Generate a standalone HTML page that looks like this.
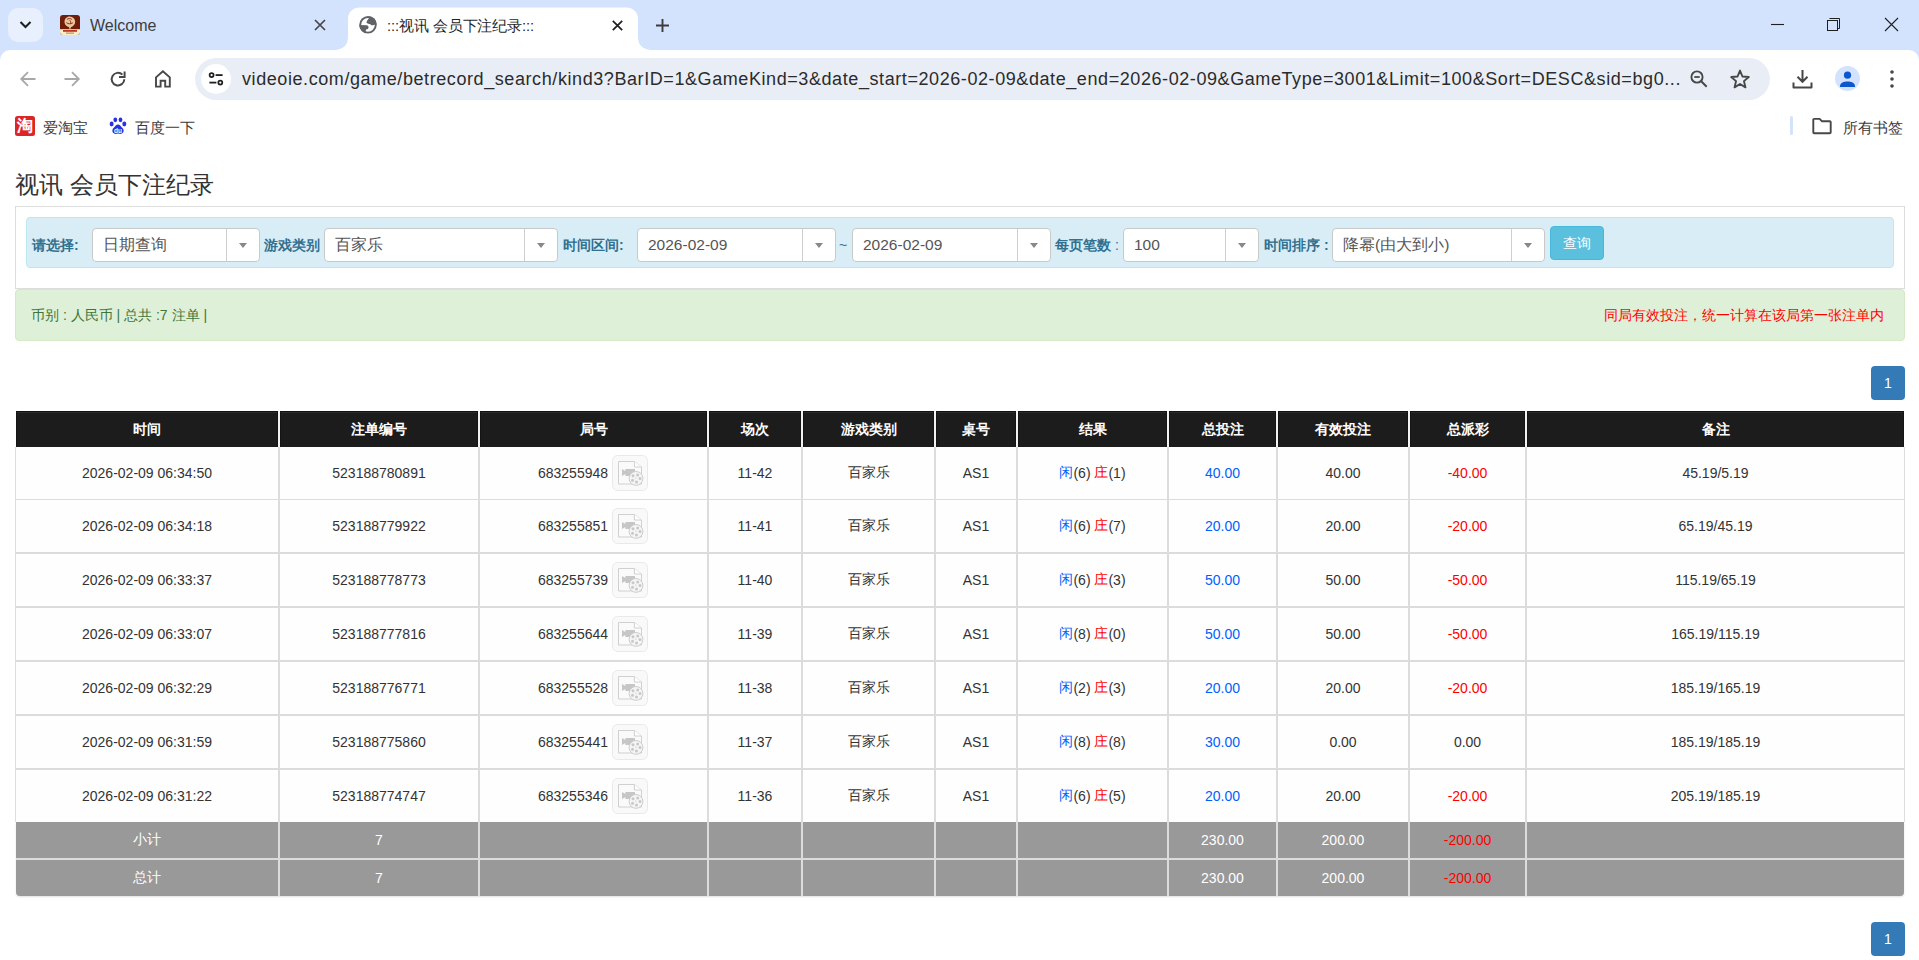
<!DOCTYPE html>
<html><head><meta charset="utf-8">
<style>
*{box-sizing:border-box}
html,body{margin:0;padding:0;width:1919px;height:960px;overflow:hidden;background:#fff;font-family:"Liberation Sans",sans-serif;position:relative}
.abs{position:absolute}
svg{display:block}
/* chrome */
#tabbar{position:absolute;left:0;top:0;width:1919px;height:64px;background:#d3e3fd}
#toolbar{position:absolute;left:0;top:50px;width:1919px;height:54px;background:#fff;border-radius:10px 10px 0 0}
.ttl{position:absolute;font-size:16px;color:#1f1f1f;white-space:nowrap;line-height:20px}
#omni{position:absolute;left:195px;top:58px;width:1575px;height:42px;border-radius:21px;background:#e9eef6}
#url{position:absolute;left:242px;top:67px;font-size:18px;line-height:24px;color:#2b2b2b;white-space:nowrap;letter-spacing:0.58px}
.bm{position:absolute;font-size:15px;color:#3b3b3b;white-space:nowrap;line-height:20px}
/* page */
#title{position:absolute;left:15px;top:170px;font-size:24px;line-height:30px;color:#333;white-space:nowrap}
#panel{position:absolute;left:15px;top:206px;width:1890px;height:83px;border:1px solid #ddd;background:#fff}
#info{position:absolute;left:26px;top:217px;width:1868px;height:51px;border:1px solid #bce8f1;background:#d9edf7;border-radius:4px}
.lb{position:absolute;top:235px;font-size:14px;line-height:20px;font-weight:bold;color:#31708f;white-space:nowrap}
.sel{position:absolute;top:228px;height:34px;border:1px solid #c9c9c9;border-radius:4px;background:#fff}
.sel .tx{position:absolute;left:10px;top:6px;font-size:15.5px;line-height:20px;color:#555;white-space:nowrap}
.sel .dv{position:absolute;right:32px;top:0;bottom:0;width:1px;background:#cfcfcf}
.sel .ca{position:absolute;right:12px;top:14px;width:0;height:0;border-left:4px solid transparent;border-right:4px solid transparent;border-top:5px solid #888}
#btn{position:absolute;left:1550px;top:226px;width:54px;height:34px;background:#5bc0de;border:1px solid #46b8da;border-radius:4px;color:#fff;font-size:14px;line-height:32px;text-align:center}
#alert{position:absolute;left:15px;top:289px;width:1890px;height:52px;background:#dff0d8;border:1px solid #d6e9c6;border-radius:4px}
.gt{position:absolute;top:305px;font-size:14px;line-height:20px;color:#3c763d;white-space:nowrap}
.pg{position:absolute;left:1871px;width:34px;height:34px;background:#337ab7;border-radius:4px;color:#fff;font-size:14px;line-height:34px;text-align:center}
/* table */
.th{position:absolute;background:#1c1c1c;border-top:1px solid #111;box-shadow:inset 0 1px 0 #2a2a2a}
.hc{position:absolute;padding-top:2px;display:flex;align-items:center;justify-content:center;color:#fff;font-weight:bold;font-size:14px;box-shadow:inset 1px 0 0 #141414,inset -1px 0 0 #141414}
.vd{position:absolute;width:2px;background:#f2f2f2}
.tb{position:absolute;background:#fefefe;border-left:1px solid #ddd;border-right:1px solid #ddd}
.hl{position:absolute;background:#dcdcdc}
.vl{position:absolute;width:2px;background:#dcdcdc}
.c{position:absolute;display:flex;align-items:center;justify-content:center;color:#333;font-size:14px;white-space:nowrap}
.c span,.hc span{display:inline-flex;align-items:center}
.c.w{color:#fff}
.gb{position:absolute;background:#999;border-radius:0 0 4px 4px;box-shadow:0 1px 2px rgba(0,0,0,.12)}
.bl{color:#0060ff;font-weight:normal}
.rd{color:#f00;font-weight:normal}
.vi{display:inline-block;width:36px;height:36px;margin-left:4px;margin-right:1px;position:relative}
.vi svg{position:absolute;left:0;top:0}
</style></head><body>

<!-- ============ TAB BAR ============ -->
<div id="tabbar"></div>
<div class="abs" style="left:8px;top:8px;width:35px;height:34px;border-radius:10px;background:#e8effd"></div>
<svg class="abs" style="left:18px;top:17px" width="15" height="15" viewBox="0 0 15 15"><path d="M2.5 5l5 5 5-5" fill="none" stroke="#1f1f1f" stroke-width="2.1"/></svg>
<!-- favicon tab1 -->
<svg class="abs" style="left:60px;top:15px" width="20" height="20" viewBox="0 0 20 20"><defs><clipPath id="fc"><rect x="0" y="0" width="20" height="20" rx="3"/></clipPath></defs><g clip-path="url(#fc)"><rect width="20" height="20" fill="#6f1c0a"/><rect y="14.2" width="20" height="5.8" fill="#f7eccb"/><path d="M9.8 1.6c2.8.1 5.4 2.2 5.4 5.4 0 2.6-2.2 4.4-4.3 5.2l-.3 1.6h-1.3l-.3-1.6C7 11.5 4.5 9.8 4.5 7c0-3.1 2.4-5.5 5.3-5.4z" fill="#e9c49c"/><path d="M7 4.5c1.2-1.3 3.6-1.4 4.8 0M6.4 7.6c1.5 1.5 4.4 1.6 6.4.2M9.6 5.2c.9.8 1.3 2 1 3.3" fill="none" stroke="#7a2410" stroke-width="0.9"/><rect x="3" y="15" width="14" height="1.8" fill="#b83a1e"/><rect x="6" y="17.6" width="8" height="1" fill="#c9773e"/></g></svg>
<div class="ttl" style="left:90px;top:16px;color:#3c3c3c">Welcome</div>
<svg class="abs" style="left:314px;top:19px" width="12" height="12" viewBox="0 0 12 12"><path d="M1 1l10 10M11 1L1 11" stroke="#474747" stroke-width="1.7"/></svg>
<!-- active tab -->
<svg class="abs" style="left:334px;top:7px" width="320" height="44" viewBox="0 0 320 44"><path d="M0 43 C9 43 14 38 14 30 L14 12 C14 5 19 0.5 26 0.5 L292 0.5 C299 0.5 304 5 304 12 L304 30 C304 38 309 43 318 43 L320 44 L0 44z" fill="#fff"/></svg>
<svg class="abs" style="left:359px;top:16px" width="18" height="18" viewBox="0 0 18 18"><defs><clipPath id="gc"><circle cx="9" cy="8.8" r="8.75"/></clipPath></defs><circle cx="9" cy="8.8" r="7.8" fill="#fff" stroke="#5f6368" stroke-width="1.9"/><g clip-path="url(#gc)" fill="#5f6368"><path d="M10.25 0L10.25 2C9.4 2.9 7.6 5 7.5 6.2C7.6 7.3 8.5 7.5 10.6 7.9C11.6 8.2 12 9.1 13.2 9.3C14.4 9.4 15.4 9 16.2 8.6L18 8.6L18 0Z"/><path d="M0 9L7.6 9.3C9.1 9.6 9.7 10.6 9.5 11.7C9.3 12.8 8.4 13.1 7.5 13.3C6.8 13.7 6.6 14.8 7 16L7 18L0 18Z"/></g></svg>
<div class="ttl" style="left:387px;top:16px;font-size:14.7px;letter-spacing:-0.1px;color:#1f1f1f">:::视讯 会员下注纪录:::</div>
<svg class="abs" style="left:611px;top:19px" width="13" height="13" viewBox="0 0 13 13"><path d="M1.8 1.8l9.4 9.4M11.2 1.8l-9.4 9.4" stroke="#1f1f1f" stroke-width="1.7"/></svg>
<svg class="abs" style="left:655px;top:18px" width="15" height="15" viewBox="0 0 15 15"><path d="M7.5 1v13M1 7.5h13" stroke="#3c3c3c" stroke-width="1.9"/></svg>
<!-- window controls -->
<svg class="abs" style="left:1770px;top:23px" width="15" height="3" viewBox="0 0 15 3"><path d="M1 1.5h13" stroke="#1f1f1f" stroke-width="1.1"/></svg>
<svg class="abs" style="left:1826px;top:17px" width="16" height="16" viewBox="0 0 16 16"><rect x="1.5" y="3.5" width="10" height="10" fill="none" stroke="#1f1f1f" stroke-width="1"/><path d="M3.5 1.5h10v10h-2" fill="none" stroke="#1f1f1f" stroke-width="1"/></svg>
<svg class="abs" style="left:1884px;top:17px" width="15" height="15" viewBox="0 0 15 15"><path d="M1 1l13 13M14 1L1 14" stroke="#1f1f1f" stroke-width="1.1"/></svg>

<!-- ============ TOOLBAR ============ -->
<div id="toolbar"></div>
<svg class="abs" style="left:19px;top:70px" width="18" height="18" viewBox="0 0 18 18"><path d="M16.5 9H2.5M9 2.2L2.2 9 9 15.8" fill="none" stroke="#a8a8a8" stroke-width="1.8"/></svg>
<svg class="abs" style="left:63px;top:70px" width="18" height="18" viewBox="0 0 18 18"><path d="M1.5 9h14M9 2.2L15.8 9 9 15.8" fill="none" stroke="#a8a8a8" stroke-width="1.8"/></svg>
<svg class="abs" style="left:108px;top:69px" width="20" height="20" viewBox="0 0 20 20"><path d="M16.3 10.2a6.3 6.3 0 1 1-1.9-4.6" fill="none" stroke="#474747" stroke-width="2"/><path d="M16.6 2.5v5.6H11" fill="none" stroke="#474747" stroke-width="2"/></svg>
<svg class="abs" style="left:153px;top:69px" width="20" height="20" viewBox="0 0 20 20"><path d="M3 17.6V8.4L9.9 2.2l6.9 6.2v9.2h-4.6v-5.9H7.6v5.9z" fill="none" stroke="#474747" stroke-width="1.9"/></svg>
<div id="omni"></div>
<div class="abs" style="left:201px;top:64px;width:30px;height:30px;border-radius:15px;background:#fff"></div>
<svg class="abs" style="left:206px;top:69px" width="20" height="20" viewBox="0 0 20 20"><circle cx="5.6" cy="6.1" r="2" fill="none" stroke="#1f1f1f" stroke-width="1.7"/><path d="M9.6 6.1h7" stroke="#1f1f1f" stroke-width="1.8"/><circle cx="14.3" cy="13.6" r="2" fill="none" stroke="#1f1f1f" stroke-width="1.7"/><path d="M3.4 13.6h7" stroke="#1f1f1f" stroke-width="1.8"/></svg>
<div id="url">videoie.com/game/betrecord_search/kind3?BarID=1&amp;GameKind=3&amp;date_start=2026-02-09&amp;date_end=2026-02-09&amp;GameType=3001&amp;Limit=100&amp;Sort=DESC&amp;sid=bg0...</div>
<svg class="abs" style="left:1689px;top:69px" width="20" height="20" viewBox="0 0 20 20"><circle cx="8" cy="8" r="5.6" fill="none" stroke="#474747" stroke-width="1.9"/><path d="M5.3 8h5.4" stroke="#474747" stroke-width="1.8"/><path d="M12.2 12.2l5.5 5.5" stroke="#474747" stroke-width="2"/></svg>
<svg class="abs" style="left:1729px;top:68px" width="22" height="22" viewBox="0 0 22 22"><path d="M11 2.6l2.45 5.9 6.35.5-4.85 4.15 1.5 6.2L11 16l-5.45 3.35 1.5-6.2L2.2 9l6.35-.5z" fill="none" stroke="#474747" stroke-width="1.9" stroke-linejoin="round"/></svg>
<svg class="abs" style="left:1792px;top:69px" width="21" height="21" viewBox="0 0 21 21"><path d="M10.5 1v11.5M5.5 7.8l5 5 5-5" fill="none" stroke="#474747" stroke-width="2"/><path d="M1.5 13.5v5h18v-5" fill="none" stroke="#474747" stroke-width="2" stroke-linejoin="round"/></svg>
<div class="abs" style="left:1835px;top:66px;width:25px;height:25px;border-radius:13px;background:#d3e3fd"></div>
<svg class="abs" style="left:1838px;top:70px" width="19" height="18" viewBox="0 0 19 18"><circle cx="9.5" cy="5.2" r="3.6" fill="#0b57d0"/><path d="M2 16.2c0-3.3 4-4.6 7.5-4.6s7.5 1.3 7.5 4.6V17H2z" fill="#0b57d0"/></svg>
<svg class="abs" style="left:1888px;top:69px" width="8" height="20" viewBox="0 0 8 20"><circle cx="4" cy="3" r="1.8" fill="#474747"/><circle cx="4" cy="10" r="1.8" fill="#474747"/><circle cx="4" cy="17" r="1.8" fill="#474747"/></svg>

<!-- ============ BOOKMARKS ============ -->
<div class="abs" style="left:15px;top:116px;width:20px;height:20px;border-radius:2.5px;background:#dc2626;color:#fff;font-size:16px;font-weight:bold;line-height:20px;text-align:center;overflow:hidden">淘</div>
<div class="bm" style="left:43px;top:118px">爱淘宝</div>
<svg class="abs" style="left:109px;top:117px" width="18" height="18" viewBox="0 0 18 18"><ellipse cx="2.6" cy="7" rx="2" ry="2.4" fill="#2932e1"/><ellipse cx="6.3" cy="2.8" rx="1.9" ry="2.4" fill="#2932e1"/><ellipse cx="11.5" cy="2.8" rx="1.9" ry="2.4" fill="#2932e1"/><ellipse cx="15.3" cy="7" rx="2" ry="2.4" fill="#2932e1"/><path d="M9 7.5c2 0 3 2.2 4.7 3.8 1.4 1.4 1.5 4.8-1.4 5.5-1.2.3-2.2-.3-3.3-.3s-2.1.6-3.3.3C2.8 16.1 3 12.7 4.3 11.3 6 9.7 7 7.5 9 7.5z" fill="#2932e1"/><text x="9" y="15.6" font-size="6.5" font-family="Liberation Sans" font-weight="bold" fill="#fff" text-anchor="middle">du</text></svg>
<div class="bm" style="left:135px;top:118px">百度一下</div>
<div class="abs" style="left:1790px;top:116px;width:3px;height:19px;border-radius:2px;background:#d3e3fd"></div>
<svg class="abs" style="left:1811px;top:117px" width="22" height="18" viewBox="0 0 22 18"><path d="M2.3 2.8c0-.5.4-.9.9-.9h5.4l2.2 2.3h8c.5 0 .9.4.9.9v10.2c0 .5-.4.9-.9.9H3.2c-.5 0-.9-.4-.9-.9z" fill="none" stroke="#474747" stroke-width="1.9" stroke-linejoin="round"/></svg>
<div class="bm" style="left:1843px;top:118px">所有书签</div>

<!-- ============ PAGE ============ -->
<div id="title">视讯 会员下注纪录</div>
<div id="panel"></div>
<div id="info"></div>
<div class="lb" style="left:32px">请选择:</div>
<div class="sel" style="left:92px;width:168px"><div class="tx">日期查询</div><div class="dv"></div><div class="ca"></div></div>
<div class="lb" style="left:264px">游戏类别</div>
<div class="sel" style="left:324px;width:234px"><div class="tx">百家乐</div><div class="dv"></div><div class="ca"></div></div>
<div class="lb" style="left:563px">时间区间:</div>
<div class="sel" style="left:637px;width:199px"><div class="tx">2026-02-09</div><div class="dv"></div><div class="ca"></div></div>
<div class="abs" style="left:839px;top:235px;font-size:14px;line-height:20px;color:#31708f">~</div>
<div class="sel" style="left:852px;width:199px"><div class="tx">2026-02-09</div><div class="dv"></div><div class="ca"></div></div>
<div class="lb" style="left:1055px">每页笔数 <span style="font-weight:normal">:</span></div>
<div class="sel" style="left:1123px;width:136px"><div class="tx">100</div><div class="dv"></div><div class="ca"></div></div>
<div class="lb" style="left:1264px">时间排序 :</div>
<div class="sel" style="left:1332px;width:213px"><div class="tx">降幂(由大到小)</div><div class="dv"></div><div class="ca"></div></div>
<div id="btn">查询</div>
<div id="alert"></div>
<div class="gt" style="left:31px">币别 : 人民币 | 总共 :7 注单 |</div>
<div class="gt" style="left:1604px;color:#f00">同局有效投注，统一计算在该局第一张注单内</div>
<div class="pg" style="top:366px">1</div>

<div class="th" style="left:16px;top:411px;width:1888px;height:36px"></div>
<div class="hc" style="left:16px;top:411px;width:262px;height:36px"><span>时间</span></div>
<div class="hc" style="left:280px;top:411px;width:198px;height:36px"><span>注单编号</span></div>
<div class="hc" style="left:480px;top:411px;width:227px;height:36px"><span>局号</span></div>
<div class="hc" style="left:709px;top:411px;width:92px;height:36px"><span>场次</span></div>
<div class="hc" style="left:803px;top:411px;width:131px;height:36px"><span>游戏类别</span></div>
<div class="hc" style="left:936px;top:411px;width:80px;height:36px"><span>桌号</span></div>
<div class="hc" style="left:1018px;top:411px;width:149px;height:36px"><span>结果</span></div>
<div class="hc" style="left:1169px;top:411px;width:107px;height:36px"><span>总投注</span></div>
<div class="hc" style="left:1278px;top:411px;width:130px;height:36px"><span>有效投注</span></div>
<div class="hc" style="left:1410px;top:411px;width:115px;height:36px"><span>总派彩</span></div>
<div class="hc" style="left:1527px;top:411px;width:377px;height:36px"><span>备注</span></div>
<div class="vd" style="left:278px;top:411px;height:36px"></div>
<div class="vd" style="left:478px;top:411px;height:36px"></div>
<div class="vd" style="left:707px;top:411px;height:36px"></div>
<div class="vd" style="left:801px;top:411px;height:36px"></div>
<div class="vd" style="left:934px;top:411px;height:36px"></div>
<div class="vd" style="left:1016px;top:411px;height:36px"></div>
<div class="vd" style="left:1167px;top:411px;height:36px"></div>
<div class="vd" style="left:1276px;top:411px;height:36px"></div>
<div class="vd" style="left:1408px;top:411px;height:36px"></div>
<div class="vd" style="left:1525px;top:411px;height:36px"></div>
<div class="tb" style="left:15px;top:447px;width:1890px;height:375px"></div>
<div class="hl" style="left:16px;top:499px;width:1888px;height:1px"></div>
<div class="hl" style="left:16px;top:552px;width:1888px;height:2px"></div>
<div class="hl" style="left:16px;top:606px;width:1888px;height:2px"></div>
<div class="hl" style="left:16px;top:660px;width:1888px;height:2px"></div>
<div class="hl" style="left:16px;top:714px;width:1888px;height:2px"></div>
<div class="hl" style="left:16px;top:768px;width:1888px;height:2px"></div>
<div class="vl" style="left:278px;top:447px;height:375px"></div>
<div class="vl" style="left:478px;top:447px;height:375px"></div>
<div class="vl" style="left:707px;top:447px;height:375px"></div>
<div class="vl" style="left:801px;top:447px;height:375px"></div>
<div class="vl" style="left:934px;top:447px;height:375px"></div>
<div class="vl" style="left:1016px;top:447px;height:375px"></div>
<div class="vl" style="left:1167px;top:447px;height:375px"></div>
<div class="vl" style="left:1276px;top:447px;height:375px"></div>
<div class="vl" style="left:1408px;top:447px;height:375px"></div>
<div class="vl" style="left:1525px;top:447px;height:375px"></div>
<div class="c" style="left:16px;top:447px;width:262px;height:52px"><span>2026-02-09 06:34:50</span></div>
<div class="c" style="left:280px;top:447px;width:198px;height:52px"><span>523188780891</span></div>
<div class="c" style="left:480px;top:447px;width:227px;height:52px"><span>683255948<span class="vi"><svg width="36" height="36" viewBox="0 0 36 36"><rect x="0.5" y="0.5" width="35" height="35" rx="5" fill="#f9f9f9" stroke="#e9e9e9"/><path d="M6.5 6.5H22.4L29.5 12V29H6.5Z" fill="#fafafa" stroke="#d0d0d0"/><path d="M22.4 6.5V12H29.5" fill="#fff" stroke="#d0d0d0"/><path d="M10 14L13.4 16V14H23V21H13.4V19L10 21Z" fill="#c6c6c6"/><circle cx="24" cy="23.4" r="6.9" fill="#f5f5f5" stroke="#cdcdcd"/><circle cx="21" cy="20.7" r="1.5" fill="#c8c8c8"/><circle cx="25.7" cy="19.9" r="1.5" fill="#c8c8c8"/><circle cx="28" cy="23.6" r="1.5" fill="#c8c8c8"/><circle cx="24.5" cy="27" r="1.5" fill="#c8c8c8"/><circle cx="20.5" cy="25.3" r="1.5" fill="#c8c8c8"/><circle cx="23.8" cy="23.2" r="0.6" fill="#c8c8c8"/></svg></span></span></div>
<div class="c" style="left:709px;top:447px;width:92px;height:52px"><span>11-42</span></div>
<div class="c" style="left:803px;top:447px;width:131px;height:52px"><span>百家乐</span></div>
<div class="c" style="left:936px;top:447px;width:80px;height:52px"><span>AS1</span></div>
<div class="c" style="left:1018px;top:447px;width:149px;height:52px"><span><b class="bl">闲</b>(6)&nbsp;<b class="rd">庄</b>(1)</span></div>
<div class="c" style="left:1169px;top:447px;width:107px;height:52px"><span><span class="bl">40.00</span></span></div>
<div class="c" style="left:1278px;top:447px;width:130px;height:52px"><span>40.00</span></div>
<div class="c" style="left:1410px;top:447px;width:115px;height:52px"><span><span class="rd">-40.00</span></span></div>
<div class="c" style="left:1527px;top:447px;width:377px;height:52px"><span>45.19/5.19</span></div>
<div class="c" style="left:16px;top:500px;width:262px;height:52px"><span>2026-02-09 06:34:18</span></div>
<div class="c" style="left:280px;top:500px;width:198px;height:52px"><span>523188779922</span></div>
<div class="c" style="left:480px;top:500px;width:227px;height:52px"><span>683255851<span class="vi"><svg width="36" height="36" viewBox="0 0 36 36"><rect x="0.5" y="0.5" width="35" height="35" rx="5" fill="#f9f9f9" stroke="#e9e9e9"/><path d="M6.5 6.5H22.4L29.5 12V29H6.5Z" fill="#fafafa" stroke="#d0d0d0"/><path d="M22.4 6.5V12H29.5" fill="#fff" stroke="#d0d0d0"/><path d="M10 14L13.4 16V14H23V21H13.4V19L10 21Z" fill="#c6c6c6"/><circle cx="24" cy="23.4" r="6.9" fill="#f5f5f5" stroke="#cdcdcd"/><circle cx="21" cy="20.7" r="1.5" fill="#c8c8c8"/><circle cx="25.7" cy="19.9" r="1.5" fill="#c8c8c8"/><circle cx="28" cy="23.6" r="1.5" fill="#c8c8c8"/><circle cx="24.5" cy="27" r="1.5" fill="#c8c8c8"/><circle cx="20.5" cy="25.3" r="1.5" fill="#c8c8c8"/><circle cx="23.8" cy="23.2" r="0.6" fill="#c8c8c8"/></svg></span></span></div>
<div class="c" style="left:709px;top:500px;width:92px;height:52px"><span>11-41</span></div>
<div class="c" style="left:803px;top:500px;width:131px;height:52px"><span>百家乐</span></div>
<div class="c" style="left:936px;top:500px;width:80px;height:52px"><span>AS1</span></div>
<div class="c" style="left:1018px;top:500px;width:149px;height:52px"><span><b class="bl">闲</b>(6)&nbsp;<b class="rd">庄</b>(7)</span></div>
<div class="c" style="left:1169px;top:500px;width:107px;height:52px"><span><span class="bl">20.00</span></span></div>
<div class="c" style="left:1278px;top:500px;width:130px;height:52px"><span>20.00</span></div>
<div class="c" style="left:1410px;top:500px;width:115px;height:52px"><span><span class="rd">-20.00</span></span></div>
<div class="c" style="left:1527px;top:500px;width:377px;height:52px"><span>65.19/45.19</span></div>
<div class="c" style="left:16px;top:554px;width:262px;height:52px"><span>2026-02-09 06:33:37</span></div>
<div class="c" style="left:280px;top:554px;width:198px;height:52px"><span>523188778773</span></div>
<div class="c" style="left:480px;top:554px;width:227px;height:52px"><span>683255739<span class="vi"><svg width="36" height="36" viewBox="0 0 36 36"><rect x="0.5" y="0.5" width="35" height="35" rx="5" fill="#f9f9f9" stroke="#e9e9e9"/><path d="M6.5 6.5H22.4L29.5 12V29H6.5Z" fill="#fafafa" stroke="#d0d0d0"/><path d="M22.4 6.5V12H29.5" fill="#fff" stroke="#d0d0d0"/><path d="M10 14L13.4 16V14H23V21H13.4V19L10 21Z" fill="#c6c6c6"/><circle cx="24" cy="23.4" r="6.9" fill="#f5f5f5" stroke="#cdcdcd"/><circle cx="21" cy="20.7" r="1.5" fill="#c8c8c8"/><circle cx="25.7" cy="19.9" r="1.5" fill="#c8c8c8"/><circle cx="28" cy="23.6" r="1.5" fill="#c8c8c8"/><circle cx="24.5" cy="27" r="1.5" fill="#c8c8c8"/><circle cx="20.5" cy="25.3" r="1.5" fill="#c8c8c8"/><circle cx="23.8" cy="23.2" r="0.6" fill="#c8c8c8"/></svg></span></span></div>
<div class="c" style="left:709px;top:554px;width:92px;height:52px"><span>11-40</span></div>
<div class="c" style="left:803px;top:554px;width:131px;height:52px"><span>百家乐</span></div>
<div class="c" style="left:936px;top:554px;width:80px;height:52px"><span>AS1</span></div>
<div class="c" style="left:1018px;top:554px;width:149px;height:52px"><span><b class="bl">闲</b>(6)&nbsp;<b class="rd">庄</b>(3)</span></div>
<div class="c" style="left:1169px;top:554px;width:107px;height:52px"><span><span class="bl">50.00</span></span></div>
<div class="c" style="left:1278px;top:554px;width:130px;height:52px"><span>50.00</span></div>
<div class="c" style="left:1410px;top:554px;width:115px;height:52px"><span><span class="rd">-50.00</span></span></div>
<div class="c" style="left:1527px;top:554px;width:377px;height:52px"><span>115.19/65.19</span></div>
<div class="c" style="left:16px;top:608px;width:262px;height:52px"><span>2026-02-09 06:33:07</span></div>
<div class="c" style="left:280px;top:608px;width:198px;height:52px"><span>523188777816</span></div>
<div class="c" style="left:480px;top:608px;width:227px;height:52px"><span>683255644<span class="vi"><svg width="36" height="36" viewBox="0 0 36 36"><rect x="0.5" y="0.5" width="35" height="35" rx="5" fill="#f9f9f9" stroke="#e9e9e9"/><path d="M6.5 6.5H22.4L29.5 12V29H6.5Z" fill="#fafafa" stroke="#d0d0d0"/><path d="M22.4 6.5V12H29.5" fill="#fff" stroke="#d0d0d0"/><path d="M10 14L13.4 16V14H23V21H13.4V19L10 21Z" fill="#c6c6c6"/><circle cx="24" cy="23.4" r="6.9" fill="#f5f5f5" stroke="#cdcdcd"/><circle cx="21" cy="20.7" r="1.5" fill="#c8c8c8"/><circle cx="25.7" cy="19.9" r="1.5" fill="#c8c8c8"/><circle cx="28" cy="23.6" r="1.5" fill="#c8c8c8"/><circle cx="24.5" cy="27" r="1.5" fill="#c8c8c8"/><circle cx="20.5" cy="25.3" r="1.5" fill="#c8c8c8"/><circle cx="23.8" cy="23.2" r="0.6" fill="#c8c8c8"/></svg></span></span></div>
<div class="c" style="left:709px;top:608px;width:92px;height:52px"><span>11-39</span></div>
<div class="c" style="left:803px;top:608px;width:131px;height:52px"><span>百家乐</span></div>
<div class="c" style="left:936px;top:608px;width:80px;height:52px"><span>AS1</span></div>
<div class="c" style="left:1018px;top:608px;width:149px;height:52px"><span><b class="bl">闲</b>(8)&nbsp;<b class="rd">庄</b>(0)</span></div>
<div class="c" style="left:1169px;top:608px;width:107px;height:52px"><span><span class="bl">50.00</span></span></div>
<div class="c" style="left:1278px;top:608px;width:130px;height:52px"><span>50.00</span></div>
<div class="c" style="left:1410px;top:608px;width:115px;height:52px"><span><span class="rd">-50.00</span></span></div>
<div class="c" style="left:1527px;top:608px;width:377px;height:52px"><span>165.19/115.19</span></div>
<div class="c" style="left:16px;top:662px;width:262px;height:52px"><span>2026-02-09 06:32:29</span></div>
<div class="c" style="left:280px;top:662px;width:198px;height:52px"><span>523188776771</span></div>
<div class="c" style="left:480px;top:662px;width:227px;height:52px"><span>683255528<span class="vi"><svg width="36" height="36" viewBox="0 0 36 36"><rect x="0.5" y="0.5" width="35" height="35" rx="5" fill="#f9f9f9" stroke="#e9e9e9"/><path d="M6.5 6.5H22.4L29.5 12V29H6.5Z" fill="#fafafa" stroke="#d0d0d0"/><path d="M22.4 6.5V12H29.5" fill="#fff" stroke="#d0d0d0"/><path d="M10 14L13.4 16V14H23V21H13.4V19L10 21Z" fill="#c6c6c6"/><circle cx="24" cy="23.4" r="6.9" fill="#f5f5f5" stroke="#cdcdcd"/><circle cx="21" cy="20.7" r="1.5" fill="#c8c8c8"/><circle cx="25.7" cy="19.9" r="1.5" fill="#c8c8c8"/><circle cx="28" cy="23.6" r="1.5" fill="#c8c8c8"/><circle cx="24.5" cy="27" r="1.5" fill="#c8c8c8"/><circle cx="20.5" cy="25.3" r="1.5" fill="#c8c8c8"/><circle cx="23.8" cy="23.2" r="0.6" fill="#c8c8c8"/></svg></span></span></div>
<div class="c" style="left:709px;top:662px;width:92px;height:52px"><span>11-38</span></div>
<div class="c" style="left:803px;top:662px;width:131px;height:52px"><span>百家乐</span></div>
<div class="c" style="left:936px;top:662px;width:80px;height:52px"><span>AS1</span></div>
<div class="c" style="left:1018px;top:662px;width:149px;height:52px"><span><b class="bl">闲</b>(2)&nbsp;<b class="rd">庄</b>(3)</span></div>
<div class="c" style="left:1169px;top:662px;width:107px;height:52px"><span><span class="bl">20.00</span></span></div>
<div class="c" style="left:1278px;top:662px;width:130px;height:52px"><span>20.00</span></div>
<div class="c" style="left:1410px;top:662px;width:115px;height:52px"><span><span class="rd">-20.00</span></span></div>
<div class="c" style="left:1527px;top:662px;width:377px;height:52px"><span>185.19/165.19</span></div>
<div class="c" style="left:16px;top:716px;width:262px;height:52px"><span>2026-02-09 06:31:59</span></div>
<div class="c" style="left:280px;top:716px;width:198px;height:52px"><span>523188775860</span></div>
<div class="c" style="left:480px;top:716px;width:227px;height:52px"><span>683255441<span class="vi"><svg width="36" height="36" viewBox="0 0 36 36"><rect x="0.5" y="0.5" width="35" height="35" rx="5" fill="#f9f9f9" stroke="#e9e9e9"/><path d="M6.5 6.5H22.4L29.5 12V29H6.5Z" fill="#fafafa" stroke="#d0d0d0"/><path d="M22.4 6.5V12H29.5" fill="#fff" stroke="#d0d0d0"/><path d="M10 14L13.4 16V14H23V21H13.4V19L10 21Z" fill="#c6c6c6"/><circle cx="24" cy="23.4" r="6.9" fill="#f5f5f5" stroke="#cdcdcd"/><circle cx="21" cy="20.7" r="1.5" fill="#c8c8c8"/><circle cx="25.7" cy="19.9" r="1.5" fill="#c8c8c8"/><circle cx="28" cy="23.6" r="1.5" fill="#c8c8c8"/><circle cx="24.5" cy="27" r="1.5" fill="#c8c8c8"/><circle cx="20.5" cy="25.3" r="1.5" fill="#c8c8c8"/><circle cx="23.8" cy="23.2" r="0.6" fill="#c8c8c8"/></svg></span></span></div>
<div class="c" style="left:709px;top:716px;width:92px;height:52px"><span>11-37</span></div>
<div class="c" style="left:803px;top:716px;width:131px;height:52px"><span>百家乐</span></div>
<div class="c" style="left:936px;top:716px;width:80px;height:52px"><span>AS1</span></div>
<div class="c" style="left:1018px;top:716px;width:149px;height:52px"><span><b class="bl">闲</b>(8)&nbsp;<b class="rd">庄</b>(8)</span></div>
<div class="c" style="left:1169px;top:716px;width:107px;height:52px"><span><span class="bl">30.00</span></span></div>
<div class="c" style="left:1278px;top:716px;width:130px;height:52px"><span>0.00</span></div>
<div class="c" style="left:1410px;top:716px;width:115px;height:52px"><span>0.00</span></div>
<div class="c" style="left:1527px;top:716px;width:377px;height:52px"><span>185.19/185.19</span></div>
<div class="c" style="left:16px;top:770px;width:262px;height:52px"><span>2026-02-09 06:31:22</span></div>
<div class="c" style="left:280px;top:770px;width:198px;height:52px"><span>523188774747</span></div>
<div class="c" style="left:480px;top:770px;width:227px;height:52px"><span>683255346<span class="vi"><svg width="36" height="36" viewBox="0 0 36 36"><rect x="0.5" y="0.5" width="35" height="35" rx="5" fill="#f9f9f9" stroke="#e9e9e9"/><path d="M6.5 6.5H22.4L29.5 12V29H6.5Z" fill="#fafafa" stroke="#d0d0d0"/><path d="M22.4 6.5V12H29.5" fill="#fff" stroke="#d0d0d0"/><path d="M10 14L13.4 16V14H23V21H13.4V19L10 21Z" fill="#c6c6c6"/><circle cx="24" cy="23.4" r="6.9" fill="#f5f5f5" stroke="#cdcdcd"/><circle cx="21" cy="20.7" r="1.5" fill="#c8c8c8"/><circle cx="25.7" cy="19.9" r="1.5" fill="#c8c8c8"/><circle cx="28" cy="23.6" r="1.5" fill="#c8c8c8"/><circle cx="24.5" cy="27" r="1.5" fill="#c8c8c8"/><circle cx="20.5" cy="25.3" r="1.5" fill="#c8c8c8"/><circle cx="23.8" cy="23.2" r="0.6" fill="#c8c8c8"/></svg></span></span></div>
<div class="c" style="left:709px;top:770px;width:92px;height:52px"><span>11-36</span></div>
<div class="c" style="left:803px;top:770px;width:131px;height:52px"><span>百家乐</span></div>
<div class="c" style="left:936px;top:770px;width:80px;height:52px"><span>AS1</span></div>
<div class="c" style="left:1018px;top:770px;width:149px;height:52px"><span><b class="bl">闲</b>(6)&nbsp;<b class="rd">庄</b>(5)</span></div>
<div class="c" style="left:1169px;top:770px;width:107px;height:52px"><span><span class="bl">20.00</span></span></div>
<div class="c" style="left:1278px;top:770px;width:130px;height:52px"><span>20.00</span></div>
<div class="c" style="left:1410px;top:770px;width:115px;height:52px"><span><span class="rd">-20.00</span></span></div>
<div class="c" style="left:1527px;top:770px;width:377px;height:52px"><span>205.19/185.19</span></div>
<div class="gb" style="left:16px;top:822px;width:1888px;height:74px"></div>
<div class="hl" style="left:16px;top:858px;width:1888px;height:2px"></div>
<div class="vl" style="left:278px;top:822px;height:74px"></div>
<div class="vl" style="left:478px;top:822px;height:74px"></div>
<div class="vl" style="left:707px;top:822px;height:74px"></div>
<div class="vl" style="left:801px;top:822px;height:74px"></div>
<div class="vl" style="left:934px;top:822px;height:74px"></div>
<div class="vl" style="left:1016px;top:822px;height:74px"></div>
<div class="vl" style="left:1167px;top:822px;height:74px"></div>
<div class="vl" style="left:1276px;top:822px;height:74px"></div>
<div class="vl" style="left:1408px;top:822px;height:74px"></div>
<div class="vl" style="left:1525px;top:822px;height:74px"></div>
<div class="c w" style="left:16px;top:822px;width:262px;height:36px"><span>小计</span></div>
<div class="c w" style="left:280px;top:822px;width:198px;height:36px"><span>7</span></div>
<div class="c w" style="left:1169px;top:822px;width:107px;height:36px"><span>230.00</span></div>
<div class="c w" style="left:1278px;top:822px;width:130px;height:36px"><span>200.00</span></div>
<div class="c w" style="left:1410px;top:822px;width:115px;height:36px"><span><span class="rd">-200.00</span></span></div>
<div class="c w" style="left:16px;top:860px;width:262px;height:36px"><span>总计</span></div>
<div class="c w" style="left:280px;top:860px;width:198px;height:36px"><span>7</span></div>
<div class="c w" style="left:1169px;top:860px;width:107px;height:36px"><span>230.00</span></div>
<div class="c w" style="left:1278px;top:860px;width:130px;height:36px"><span>200.00</span></div>
<div class="c w" style="left:1410px;top:860px;width:115px;height:36px"><span><span class="rd">-200.00</span></span></div>

<div class="pg" style="top:922px">1</div>
</body></html>
